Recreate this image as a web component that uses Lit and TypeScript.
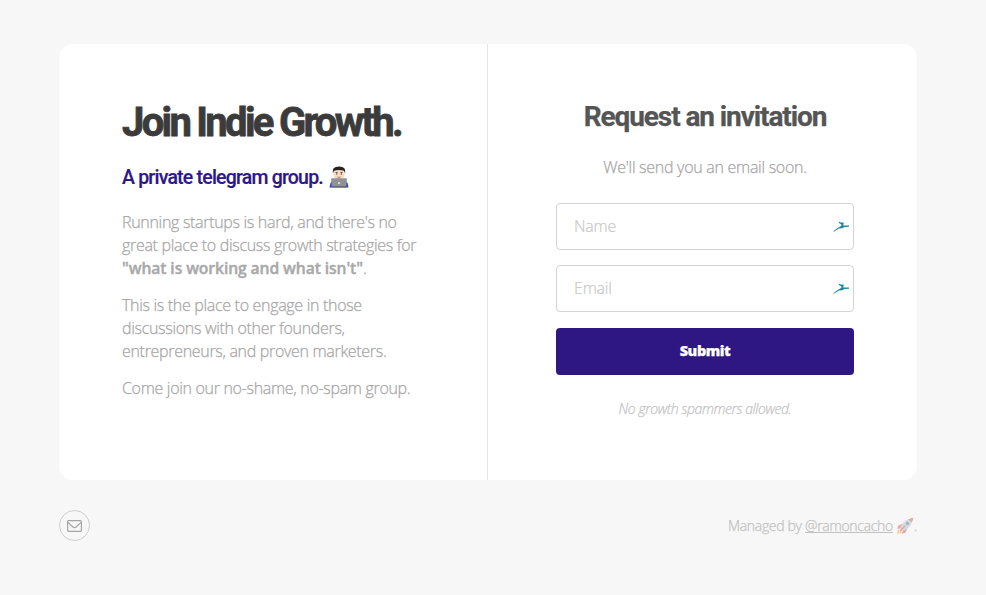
import { LitElement, html, css, svg } from "lit";
import { customElement, property } from "lit/decorators.js";

const leap = svg`
  <path d="M0.2 12.3 L1.2 10.6 L4 8.2 L7.2 6.2 L8.1 5.4 L7.8 4.2 L5.6 3.1 L5.5 1.6 L7.4 2.4 L9.9 2.4 L10.2 3.3 L9.6 5.4 L15.2 5.4 V6.7 L11 7.1 L8.8 8.3 L5.6 8.5 L3 10.2 Z" />
`;

@customElement("text-field")
class TextField extends LitElement {
  @property() label = "";

  static styles = css`
    :host {
      display: block;
    }
    .field {
      box-sizing: border-box;
      display: flex;
      align-items: center;
      height: 47px;
      padding: 0 4px 0 17px;
      border: 1px solid #d4d4d4;
      border-radius: 4px;
      background: #fff;
    }
    .input {
      flex: 1;
      min-width: 0;
      padding: 0 0 2px;
      border: 0;
      outline: 0;
      background: none;
      font: 300 16px "Open Sans", sans-serif;
      letter-spacing: -0.2px;
      color: #777;
      -webkit-text-stroke: 0.2px;
    }
    .input::placeholder {
      color: #c8c8c8;
      opacity: 1;
    }
    .mark {
      width: 16px;
      height: 13px;
      fill: #1a879d;
    }
  `;

  render() {
    return html`<div class="field">
      <input class="input" placeholder=${this.label} aria-label=${this.label} />
      <svg class="mark" viewBox="0 0 15.2 13" preserveAspectRatio="none">${leap}</svg>
    </div>`;
  }
}

@customElement("app-root")
class AppRoot extends LitElement {
  static styles = css`
    :host {
      display: block;
      box-sizing: border-box;
      min-height: 595px;
      padding: 44px 69px 0 59px;
      background: #f7f7f7;
      font: 300 16px/23px "Open Sans", sans-serif;
      letter-spacing: -0.31px;
      color: #a6a6a6;
      -webkit-text-stroke: 0.25px;
    }
    .card {
      display: flex;
      height: 436px;
      border-radius: 14px;
      background: #fff;
    }
    .pitch {
      box-sizing: border-box;
      width: 429px;
      padding: 54px 0 0 63px;
      border-right: 1px solid #e6e6e6;
      white-space: nowrap;
    }
    .request {
      flex: 1;
      padding: 54px 63px 0 68px;
      text-align: center;
    }
    h1,
    h2,
    h3,
    p {
      margin: 0;
    }
    h1 {
      font: 700 40px/50px Roboto, sans-serif;
      letter-spacing: -2.7px;
      color: #3b3b3b;
      -webkit-text-stroke: 0.8px;
    }
    h2 {
      display: flex;
      align-items: center;
      height: 28px;
      margin: 15px 0 20px;
      font: 500 19.5px/28px Roboto, sans-serif;
      letter-spacing: -0.79px;
      color: #2e1786;
      -webkit-text-stroke: 0.2px;
    }
    h2 span {
      padding-top: 2px;
    }
    h3 {
      font: 700 28px/38px Roboto, sans-serif;
      letter-spacing: -1.1px;
      color: #555;
    }
    .coder {
      width: 20px;
      height: 22px;
      margin-left: 6px;
    }
    .pitch p {
      margin-bottom: 14px;
    }
    b {
      font-weight: 600;
      font-size: 15.7px;
      letter-spacing: -0.1px;
      color: #a9a9a9;
      -webkit-text-stroke: 0.4px;
    }
    .sub {
      margin: 20px 0 24px;
      letter-spacing: -0.28px;
    }
    text-field {
      margin-bottom: 15px;
    }
    .submit {
      display: block;
      width: 100%;
      height: 47px;
      margin-top: 16px;
      padding: 0 0 3px;
      border: 0;
      border-radius: 4px;
      background: #2f1783;
      color: #fff;
      font: 800 14.5px "Open Sans", sans-serif;
      letter-spacing: -0.45px;
    }
    .note {
      margin-top: 22px;
      font-size: 14px;
      font-style: italic;
      letter-spacing: -0.42px;
      color: #c4c4c4;
    }
    .footer {
      display: flex;
      justify-content: space-between;
      align-items: center;
      margin-top: 30px;
      font-size: 14px;
      color: #c2c2c2;
    }
    .mail {
      box-sizing: border-box;
      display: flex;
      align-items: center;
      justify-content: center;
      width: 31px;
      height: 31px;
      border: 1px solid #cfcfcf;
      border-radius: 50%;
    }
    .mail svg {
      width: 15px;
      height: 12px;
      fill: none;
      stroke: #a4a5a4;
      stroke-width: 1.2;
    }
    .credit {
      display: flex;
      align-items: center;
      white-space: pre;
    }
    .link {
      text-decoration: underline;
    }
    .rocket {
      width: 18px;
      height: 18px;
      margin-left: 3px;
      opacity: 0.45;
    }
  `;

  render() {
    return html`
      <main class="card">
        <section class="pitch">
          <h1>Join Indie Growth.</h1>
          <h2>
            <span>A private telegram group.</span>
            <svg class="coder" viewBox="0 0 20 22">
              <path d="M.5 21.4 L1.5 17 Q4 13 10 13 Q16 13 18.5 17 L19.5 21.4 Z" fill="#2d3bc4" />
              <path d="M8 11 H12 V15 H8 Z" fill="#e5bfa1" />
              <ellipse cx="10" cy="7.5" rx="5.8" ry="6.2" fill="#f6dbc5" />
              <path d="M3.8 7.5 Q2.4 0.4 10 0.4 Q17.6 0.4 16.2 7.5 L15 4.7 Q10 3.3 5 4.7 Z" fill="#272321" />
              <path d="M6.5 6.5 H8.6 M11.4 6.5 H13.5" stroke="#463129" stroke-width=".8" />
              <path d="M7.1 8 H8.3 M11.7 8 H12.9" stroke="#302622" stroke-width="1.1" />
              <path d="M8.4 11 Q10 12 11.6 11" stroke="#b65c50" fill="none" stroke-width=".8" />
              <path d="M3 12.3 H17 Q18 12.3 17.9 13.3 L17.3 21 H2.7 L2.1 13.3 Q2 12.3 3 12.3 Z" fill="#909295" />
              <path d="M2.7 20 H17.3 V21.4 H2.7 Z" fill="#66696d" />
              <circle cx="10" cy="17" r="1" fill="#eee" />
            </svg>
          </h2>
          <p>
            Running startups is hard, and there's no<br />great place to discuss growth strategies for<br /><b
              >"what is working and what isn't"</b
            >.
          </p>
          <p>
            This is the place to engage in those<br />discussions with other founders,<br />entrepreneurs, and proven
            marketers.
          </p>
          <p>Come join our no-shame, no-spam group.</p>
        </section>
        <section class="request">
          <h3>Request an invitation</h3>
          <p class="sub">We'll send you an email soon.</p>
          <text-field label="Name"></text-field>
          <text-field label="Email"></text-field>
          <button class="submit">Submit</button>
          <p class="note">No growth spammers allowed.</p>
        </section>
      </main>
      <footer class="footer">
        <span class="mail">
          <svg viewBox="0 0 15 12">
            <rect x=".6" y=".6" width="13.8" height="10.8" rx="1" />
            <path d="M1 2.4 L6 7 Q7.5 8.3 9 7 L14 2.4" />
          </svg>
        </span>
        <span class="credit"
          >Managed by <span class="link">@ramoncacho</span
          ><svg class="rocket" viewBox="0 0 18 18">
            <path d="M1 17 L2.5 11.5 L6.5 15.5 Z" fill="#f6a33b" />
            <path d="M2.6 14.8 L4 12 L6 14 Z" fill="#ffe16b" />
            <path d="M7 6.5 L2.5 8.5 L1 12 L5.5 11 Z M11.5 11 L9.5 15.5 L6 17 L7 12.5 Z" fill="#d94a42" />
            <path d="M4 11.5 Q7 3.5 13 2 L16 5 Q14.5 11 6.5 14 Z" fill="#aebac5" />
            <path d="M12.5 2.2 Q15 .8 17.3 .7 Q17.2 3 15.8 5.5 Z" fill="#d94a42" />
            <circle cx="11.5" cy="6.5" r="1.7" fill="#386f9e" />
            <path d="M4 14 L9 9" stroke="#c33e3b" stroke-width="1.3" /></svg
          >.</span
        >
      </footer>
    `;
  }
}
